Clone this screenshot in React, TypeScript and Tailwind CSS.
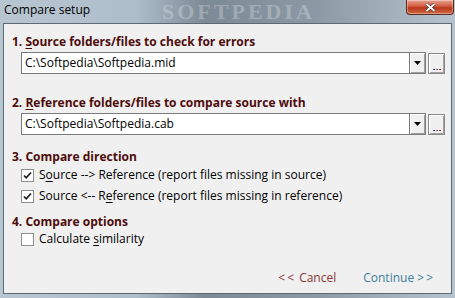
import React from "react";

const font = { fontFamily: '"Open Sans", "Noto Sans", sans-serif' };

const SectionTitle = ({ num, mnemonic, rest }: { num: string; mnemonic?: string; rest: string }) => (
  <div className="h-[16px] leading-[16px] text-[12px] font-bold text-[#4e0c0c] pl-[8px] whitespace-nowrap">
    {num}{" "}
    {mnemonic && <span className="underline underline-offset-2">{mnemonic}</span>}
    {rest}
  </div>
);

const ComboRow = ({ value }: { value: string }) => (
  <div className="flex items-center pl-[17px] pr-[6px]">
    <div className="flex-1 h-[22px] bg-white border border-[#7a7a7a] border-r-0 flex items-center">
      <span className="pl-[3px] text-[12px] text-black whitespace-nowrap">{value}</span>
    </div>
    <div className="w-[17px] h-[22px] bg-[#f0f0f0] border border-[#7a7a7a] flex items-center justify-center shadow-[inset_1px_1px_0_#ffffff,inset_-1px_-1px_0_#a0a0a0]">
      <svg width="7" height="4" viewBox="0 0 7 4">
        <path d="M0 0h7L3.5 4z" fill="#000" />
      </svg>
    </div>
    <div className="ml-[2px] w-[17px] h-[21px] bg-[#f0f0f0] border border-[#8a8a8a] flex items-end justify-center pb-[3px] shadow-[inset_1px_1px_0_#ffffff,inset_-1px_-1px_0_#a0a0a0]">
      <div className="flex gap-[1px]">
        <span className="w-[2px] h-[1px] bg-[#3030a0]" />
        <span className="w-[2px] h-[1px] bg-[#606060]" />
        <span className="w-[2px] h-[1px] bg-[#a03030]" />
      </div>
    </div>
  </div>
);

const Check = ({ checked, children }: { checked: boolean; children: React.ReactNode }) => (
  <div className="flex items-center h-[16px] pl-[17px]">
    <div className="w-[13px] h-[13px] bg-white border border-[#8e8f8f] flex items-center justify-center">
      {checked && (
        <svg width="9" height="9" viewBox="0 0 9 9">
          <path d="M1 4.5l2.2 2.3L8 1.5" stroke="#222" strokeWidth="1.8" fill="none" />
        </svg>
      )}
    </div>
    <span className="ml-[5px] text-[12px] text-black whitespace-nowrap">{children}</span>
  </div>
);

export default function App() {
  return (
    <div
      className="w-[455px] h-[298px] flex flex-col overflow-hidden bg-[linear-gradient(90deg,#b8c6d2_0%,#aebdca_30%,#7c8a96_45%,#8d9aa6_70%,#b6c4cf_100%)]"
      style={font}
    >
      <div className="h-[23px] relative flex items-start justify-between">
        <span className="pl-[4px] pt-[2px] text-[12px] text-black leading-[16px]">Compare setup</span>
        <span
          className="absolute left-[162px] top-[1px] text-[22px] font-bold tracking-[3px] text-white/25 leading-[22px]"
          style={{ fontFamily: '"Liberation Serif", serif' }}
        >
          SOFTPEDIA
        </span>
        <div className="mr-[1px] w-[48px] h-[15px] rounded-b-[4px] border border-t-0 border-[#5b2a20] bg-[linear-gradient(180deg,#e8a493_0%,#d35a3e_45%,#b8371c_55%,#cf6a40_100%)] flex items-center justify-center shadow-[inset_0_0_0_1px_rgba(255,255,255,0.35)]">
          <svg width="11" height="9" viewBox="0 0 11 9">
            <path d="M1.5 1l8 7M9.5 1l-8 7" stroke="#3a2a2a" strokeWidth="3.2" />
            <path d="M1.5 1l8 7M9.5 1l-8 7" stroke="#fff" strokeWidth="1.8" />
          </svg>
        </div>
      </div>
      <div className="flex-1 mx-[3px] mb-[4px] border border-[#5c6a76] bg-[#f0f0f0] flex flex-col pt-[10px] relative">
        <SectionTitle num="1." mnemonic="S" rest="ource folders/files to check for errors" />
        <div className="mt-[2px]">
          <ComboRow value="C:\Softpedia\Softpedia.mid" />
        </div>
        <div className="mt-[21px]">
          <SectionTitle num="2." mnemonic="R" rest="eference folders/files to compare source with" />
        </div>
        <div className="mt-[2px]">
          <ComboRow value="C:\Softpedia\Softpedia.cab" />
        </div>
        <div className="mt-[14px]">
          <SectionTitle num="3." rest="Compare direction" />
        </div>
        <div className="mt-[2px] flex flex-col gap-[5px]">
          <Check checked>
            S<span className="underline underline-offset-2">o</span>urce --&gt; Reference (report files missing in source)
          </Check>
          <Check checked>
            Source &lt;-- R<span className="underline underline-offset-2">e</span>ference (report files missing in reference)
          </Check>
        </div>
        <div className="mt-[10px]">
          <SectionTitle num="4." rest="Compare options" />
        </div>
        <div className="mt-[1px]">
          <Check checked={false}>
            Calculate <span className="underline underline-offset-2">s</span>imilarity
          </Check>
        </div>
        <div className="mt-auto mb-[6px] flex justify-end gap-[27px] pr-[16px] text-[12px]">
          <span className="text-[#8b3434]">
            <span className="tracking-[2px]">&lt;&lt;</span> Cancel
          </span>
          <span className="text-[#3d7f9c]">
            Continue <span className="tracking-[2px]">&gt;&gt;</span>
          </span>
        </div>
      </div>
    </div>
  );
}
